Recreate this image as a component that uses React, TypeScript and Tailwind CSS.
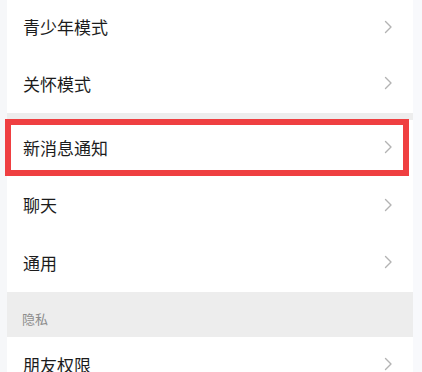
import React from "react";

const Chevron = () => (
  <svg width="9" height="14" viewBox="0 0 9 14" fill="none">
    <polyline points="1.5,1.5 7,7 1.5,12.5" stroke="#b3b3b3" strokeWidth="1.4" strokeLinecap="round" strokeLinejoin="round" />
  </svg>
);

const Row = ({ label, h = "h-[56px]" }: { label: string; h?: string }) => (
  <div className={`flex shrink-0 items-center justify-between bg-white pl-[16px] pr-[20px] pb-[3px] ${h}`}>
    <span className="text-[17px] text-[#1c1c1c] leading-none">{label}</span>
    <Chevron />
  </div>
);

export default function App() {
  return (
    <div
      className="flex w-[422px] h-[372px] overflow-hidden bg-[#f7f8fa]"
      style={{ fontFamily: '"Noto Sans CJK SC", "Noto Sans", sans-serif' }}
    >
      <div className="w-[7px] shrink-0 bg-[#f6f7f9]" />
      <div className="relative w-[406px] shrink-0 flex flex-col">
        <Row label="青少年模式" h="h-[56px]" />
        <Row label="关怀模式" h="h-[57px]" />
        <div className="h-[7px] shrink-0 bg-[#ededed]" />
        <Row label="新消息通知" h="h-[57px]" />
        <Row label="聊天" h="h-[58px]" />
        <Row label="通用" h="h-[57px]" />
        <div className="h-[45px] shrink-0 bg-[#ededed] flex items-end pl-[15px] pb-[12px]">
          <span className="text-[13px] text-[#8c8c8c] leading-none">隐私</span>
        </div>
        <Row label="朋友权限" h="h-[57px]" />
        <div className="absolute left-[-2px] top-[119px] w-[404px] h-[57px] border-[6px] border-[#ef3f41]" />
      </div>
      <div className="flex-1 bg-[#f8f9fc]" />
    </div>
  );
}
